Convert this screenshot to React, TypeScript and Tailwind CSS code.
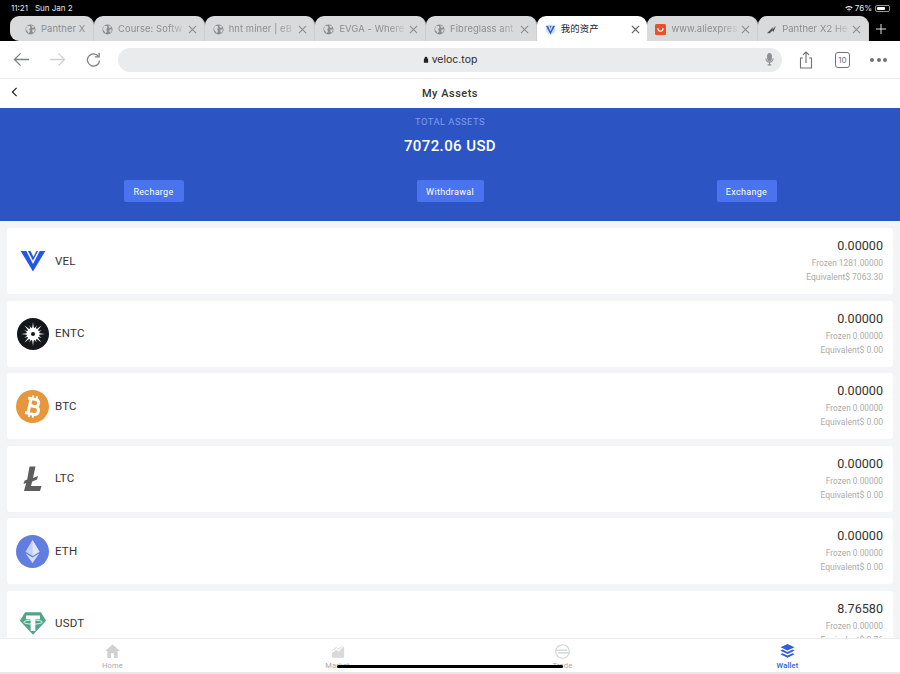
import { ReactNode } from "react";

const tabs = [
  { title: "Course: Softw", icon: "globe" },
  { title: "hnt miner | eB", icon: "globe" },
  { title: "EVGA - Where", icon: "globe" },
  { title: "Fibreglass ant", icon: "globe" },
  { title: "我的资产", icon: "vel", active: true },
  { title: "www.aliexpres", icon: "ali" },
  { title: "Panther X2 He", icon: "panther" },
];

function Globe() {
  return (
    <svg viewBox="0 0 12 12" className="w-[11px] h-[11px] shrink-0">
      <circle cx="6" cy="6" r="5.5" fill="#8b8d91" />
      <path d="M2 2.5 L5 2 L6 4 L4.5 5.5 L5.5 8 L4 10 L2.5 8 L1 6 Z M7 1 L10 3 L9 4.5 L7.5 3.5 Z M8 6 L11 6 L9.5 9.5 L8 8.5 Z" fill="#d9dadc" />
    </svg>
  );
}

function TabIcon({ icon }: { icon?: string }) {
  if (icon === "vel") {
    return (
      <svg viewBox="0 0 12 12" className="w-[11px] h-[11px] shrink-0">
        <circle cx="6" cy="6" r="5.5" fill="#d5e0f8" />
        <path d="M1 2 L6 11.5 L11 2 L8.8 2 L6 8 L3.2 2 Z" fill="#2f5fd0" />
        <path d="M5 2 L6 5 L7 2 Z" fill="#2f5fd0" />
      </svg>
    );
  }
  if (icon === "ali") {
    return (
      <svg viewBox="0 0 12 12" className="w-[11px] h-[11px] shrink-0">
        <rect width="12" height="12" rx="1.5" fill="#e8502f" />
        <path d="M3 4.5 C3.5 9 8.5 9 9 4.5" stroke="#fff" strokeWidth="1.2" fill="none" />
      </svg>
    );
  }
  if (icon === "panther") {
    return (
      <svg viewBox="0 0 12 12" className="w-[11px] h-[11px] shrink-0">
        <path d="M1 10 L8 3 L7 6 L11 2 L8 9 L7.5 7 L4 10 Z" fill="#4f5a50" />
      </svg>
    );
  }
  return <Globe />;
}

function CloseIcon({ dark }: { dark?: boolean }) {
  return (
    <svg viewBox="0 0 10 10" className="w-[9px] h-[9px] shrink-0" stroke={dark ? "#55575a" : "#8b8d91"} strokeWidth="1.2" fill="none">
      <path d="M1 1 L9 9 M9 1 L1 9" />
    </svg>
  );
}

function Tab({ title, icon, active, first }: { title: string; icon?: string; active?: boolean; first?: boolean }) {
  return (
    <div
      className={`flex items-center h-full pt-[1px] rounded-t-[9px] ${first ? "w-[84px] pl-[15px] rounded-bl-[9px]" : "w-[110.7px] pl-[8px]"} pr-[7px] ${active ? "bg-white text-[#222]" : "bg-[#d9dadc] text-[#8b8d91] border-r border-[#cdced0]"}`}
    >
      <TabIcon icon={icon} />
      <span className={`ml-[5px] flex-1 whitespace-nowrap text-[9.4px] tracking-[0.1px] ${active || first ? "" : "[mask-image:linear-gradient(to_right,black_72%,transparent)]"}`}>
        {title}
      </span>
      {!first && <CloseIcon dark={active} />}
    </div>
  );
}

function StatusBar() {
  return (
    <div className="h-[16px] bg-black text-[#e8e8e8] text-[8px] flex items-center justify-between pl-[11px] pr-[10px]">
      <div className="flex gap-[7px]">
        <span>11:21</span>
        <span>Sun Jan 2</span>
      </div>
      <div className="flex items-center gap-[2px]">
        <svg viewBox="0 0 12 9" className="w-[8px] h-[7px]">
          <path d="M0.5 3 C3.5 0 8.5 0 11.5 3 L10.2 4.4 C8 2.2 4 2.2 1.8 4.4 Z M3 5.5 C4.6 4 7.4 4 9 5.5 L7.7 6.8 C6.8 6 5.2 6 4.3 6.8 Z M6 9 L4.9 7.7 C5.5 7.2 6.5 7.2 7.1 7.7 Z" fill="#e8e8e8" />
        </svg>
        <span>76%</span>
        <div className="w-[15px] h-[7px] rounded-[2px] border border-[#999] p-px ml-[1px]">
          <div className="w-3/4 h-full bg-white rounded-[1px]" />
        </div>
      </div>
    </div>
  );
}

function TabBar() {
  return (
    <div className="h-[25px] bg-black flex pl-[10px]">
      <Tab title="Panther X" first />
      {tabs.map((t) => (
        <Tab key={t.title} title={t.title} icon={t.icon} active={t.active} />
      ))}
      <div className="flex-1 flex items-center justify-center pr-[6px] pt-[1px]">
        <svg viewBox="0 0 12 12" className="w-[12px] h-[12px]" stroke="#e5e5e5" strokeWidth="1" fill="none">
          <path d="M6 1 V11 M1 6 H11" />
        </svg>
      </div>
    </div>
  );
}

function Toolbar() {
  return (
    <div className="h-[38px] bg-white border-b border-[#e9e9ea] flex items-center pl-[13px] pr-[11px]">
      <svg viewBox="0 0 18 16" className="w-[17px] h-[15px]" stroke="#7e8084" strokeWidth="1.4" fill="none">
        <path d="M17 8 H1.5 M8 1.5 L1.5 8 L8 14.5" />
      </svg>
      <svg viewBox="0 0 18 16" className="w-[17px] h-[15px] ml-[19px]" stroke="#cfd0d2" strokeWidth="1.4" fill="none">
        <path d="M1 8 H16.5 M10 1.5 L16.5 8 L10 14.5" />
      </svg>
      <svg viewBox="0 0 16 16" className="w-[15px] h-[15px] ml-[20px]" stroke="#7e8084" strokeWidth="1.4" fill="none">
        <path d="M13.5 5 A6.5 6.5 0 1 0 14.5 9" />
        <path d="M9.5 5.2 H14 V0.8" />
      </svg>
      <div className="ml-[17px] w-[664px] h-[24px] rounded-full bg-[#eaebec] flex items-center relative">
        <div className="flex-1 flex items-center justify-center gap-[3px] text-[10.5px] text-[#2b2b2b]">
          <svg viewBox="0 0 8 10" className="w-[6px] h-[7px]">
            <path d="M2 4 V3 A2 2 0 0 1 6 3 V4 H7 V9.5 H1 V4 Z" fill="#222" />
          </svg>
          <span>veloc.top</span>
        </div>
        <svg viewBox="0 0 10 14" className="absolute right-[8px] w-[9px] h-[13px]" fill="none" stroke="#8e9093" strokeWidth="1.2">
          <rect x="3" y="0.5" width="4" height="8" rx="2" fill="#8e9093" />
          <path d="M1 6 A4 4 0 0 0 9 6 M5 10 V13 M3 13 H7" />
        </svg>
      </div>
      <svg viewBox="0 0 14 18" className="w-[14px] h-[18px] ml-[17px]" stroke="#6f7174" strokeWidth="1.1" fill="none">
        <path d="M4 7 H1.5 V17 H12.5 V7 H10 M7 12 V1 M4 3.8 L7 1 L10 3.8" />
      </svg>
      <div className="ml-[22px] w-[15px] h-[16px] rounded-[3px] border border-[#6f7174] text-[#6f7174] text-[8px] flex items-center justify-center">
        10
      </div>
      <div className="ml-[20px] flex gap-[2.5px]">
        <span className="w-[4px] h-[4px] rounded-full bg-[#6f7174]" />
        <span className="w-[4px] h-[4px] rounded-full bg-[#6f7174]" />
        <span className="w-[4px] h-[4px] rounded-full bg-[#6f7174]" />
      </div>
    </div>
  );
}

function VelIcon() {
  return (
    <svg viewBox="0 0 28 24" className="w-[28px] h-[22px]">
      <path d="M0.5 1 L27.5 1 L14 23.5 Z" fill="#2456e6" />
      <path d="M7 0 L14 13.5 L21 0" stroke="#fff" strokeWidth="1.6" fill="none" />
      <path d="M11 0.5 L18 0.5 L14.5 7.5 Z" fill="#fff" />
    </svg>
  );
}

function EntcIcon() {
  const spikes = Array.from({ length: 16 }, (_, i) => i * 22.5);
  return (
    <svg viewBox="0 0 32 32" className="w-[32px] h-[32px]">
      <circle cx="16" cy="16" r="16" fill="#14171a" />
      {spikes.map((a, i) => (
        <path key={a} d={`M14.4 16 L16 ${i % 2 ? 6.5 : 4} L17.6 16 Z`} fill="#fff" transform={`rotate(${a} 16 16)`} />
      ))}
      <circle cx="16" cy="16" r="6.5" fill="#fff" />
      <circle cx="16" cy="16" r="2" fill="#14171a" />
    </svg>
  );
}

function BtcIcon() {
  return (
    <svg viewBox="0 0 33 33" className="w-[33px] h-[33px]">
      <circle cx="16.5" cy="16.5" r="16.5" fill="#e7963c" />
      <g transform="rotate(12 16.5 16.5)" fill="none" stroke="#fff">
        <path d="M10.5 9 H18.5 C23 9 23 16 18.5 16 H13 M13 16 H19.5 C24.5 16 24.5 24 19.5 24 H10.5 M13.5 9 V24" strokeWidth="3" />
        <path d="M15 5.5 V9 M19 5.5 V9 M15 24 V27.5 M19 24 V27.5" strokeWidth="1.8" />
      </g>
    </svg>
  );
}

function LtcIcon() {
  return (
    <svg viewBox="0 0 33 33" className="w-[33px] h-[33px]">
      <path d="M13.5 4.5 H19.5 L17 16 L22 14 L21 17.5 L16.2 19.5 L15 24 H25.5 L24 29 H8 L10.2 21 L7.5 22 L8.5 18.7 L11.2 17.6 Z" fill="#5d5d5d" />
    </svg>
  );
}

function EthIcon() {
  return (
    <svg viewBox="0 0 33 33" className="w-[33px] h-[33px]">
      <circle cx="16.5" cy="16.5" r="16.5" fill="#627de0" />
      <path d="M16.5 5 L9.5 16.8 L16.5 21 L23.5 16.8 Z" fill="#c4cef3" />
      <path d="M16.5 5 V21 L23.5 16.8 Z" fill="#dfe5fa" />
      <path d="M9.5 18.3 L16.5 28 L23.5 18.3 L16.5 22.5 Z" fill="#d7def8" />
    </svg>
  );
}

function UsdtIcon() {
  return (
    <svg viewBox="0 0 30 26" className="w-[28px] h-[25px]">
      <path d="M6.5 1 H23.5 L29 10 L15 25 L1 10 Z" fill="#50a586" />
      <path d="M7.5 4.5 H22.5 V8.5 H17.5 V21 H12.5 V8.5 H7.5 Z" fill="#fff" />
      <ellipse cx="15" cy="11.5" rx="10" ry="2.2" fill="none" stroke="#fff" strokeWidth="0.9" />
    </svg>
  );
}

const assets: { name: string; icon: ReactNode; amount: string; frozen: string; equivalent: string }[] = [
  { name: "VEL", icon: <VelIcon />, amount: "0.00000", frozen: "1281.00000", equivalent: "7063.30" },
  { name: "ENTC", icon: <EntcIcon />, amount: "0.00000", frozen: "0.00000", equivalent: "0.00" },
  { name: "BTC", icon: <BtcIcon />, amount: "0.00000", frozen: "0.00000", equivalent: "0.00" },
  { name: "LTC", icon: <LtcIcon />, amount: "0.00000", frozen: "0.00000", equivalent: "0.00" },
  { name: "ETH", icon: <EthIcon />, amount: "0.00000", frozen: "0.00000", equivalent: "0.00" },
  { name: "USDT", icon: <UsdtIcon />, amount: "8.76580", frozen: "0.00000", equivalent: "8.76" },
];

function AssetRow({ name, icon, amount, frozen, equivalent }: (typeof assets)[number]) {
  return (
    <div className="h-[66px] shrink-0 mb-[6.5px] bg-white rounded-[3px] flex items-center pl-[9px] pr-[10px]">
      <div className="w-[33px] h-[33px] flex items-center justify-center">{icon}</div>
      <span className="ml-[6px] pt-[1px] text-[11.5px] text-[#333] tracking-[0.2px]">{name}</span>
      <div className="ml-auto flex flex-col items-end">
        <span className="text-[12.6px] leading-[16px] mb-[2px] text-[#333]">{amount}</span>
        <span className="text-[8.3px] leading-[14px] text-[#ababab]">Frozen {frozen}</span>
        <span className="text-[8.5px] leading-[14px] text-[#ababab]">Equivalent$ {equivalent}</span>
      </div>
    </div>
  );
}

function NavItem({ label, active, children }: { label: string; active?: boolean; children: ReactNode }) {
  return (
    <div className="flex flex-col items-center pt-[4px]">
      <div className="h-[16px] flex items-center justify-center">{children}</div>
      <span className={`text-[7.5px] mt-[2px] leading-[10px] tracking-[0.2px] ${active ? "text-[#2f5fdc] font-medium" : "text-[#a9a9a9]"}`}>{label}</span>
    </div>
  );
}

export default function App() {
  return (
    <div className="w-[900px] h-[674px] overflow-hidden flex flex-col relative bg-[#f3f4f6] font-['Roboto',sans-serif]">
      <div className="font-['Inter','Noto_Sans_CJK_SC',sans-serif]">
        <StatusBar />
        <TabBar />
        <Toolbar />
      </div>
      <header className="h-[29px] pt-[1px] bg-white flex items-center justify-center relative">
        <svg viewBox="0 0 8 12" className="absolute left-[11px] top-[8px] w-[7px] h-[10px]" stroke="#222" strokeWidth="1.5" fill="none">
          <path d="M6.5 1 L1.5 6 L6.5 11" />
        </svg>
        <h1 className="text-[11px] font-medium text-[#333] tracking-[0.5px]">My Assets</h1>
      </header>
      <section className="h-[113px] bg-[#2c55c3] flex flex-col items-center px-[7px]">
        <p className="mt-[7px] text-[9.5px] leading-[13px] text-[#7d9bf0] tracking-[0.4px]">TOTAL ASSETS</p>
        <p className="mt-[8px] text-[15px] leading-[20px] font-medium text-white tracking-[0.4px]">7072.06 USD</p>
        <div className="mt-[24px] w-full flex justify-around">
          {["Recharge", "Withdrawal", "Exchange"].map((b) => (
            <button key={b} className={`h-[22px] pt-[3px] rounded-[2px] bg-[#4a73ef] text-white text-[9px] tracking-[0.3px] flex items-center justify-center ${b === "Withdrawal" ? "w-[67px]" : "w-[60px]"}`}>
              {b}
            </button>
          ))}
        </div>
      </section>
      <main className="flex-1 min-h-0 overflow-hidden px-[7px] pt-[7px]">
        {assets.map((a) => (
          <AssetRow key={a.name} {...a} />
        ))}
      </main>
      <nav className="h-[36px] bg-white border-t border-[#ececec] border-b-2 border-b-[#e8e8e8] grid grid-cols-4 shrink-0">
        <NavItem label="Home">
          <svg viewBox="0 0 16 15" className="w-[15px] h-[14px]">
            <path d="M8 0.5 L16 7.5 H13.5 V15 H9.5 V10 H6.5 V15 H2.5 V7.5 H0 Z" fill="#d0d1d3" />
          </svg>
        </NavItem>
        <NavItem label="Market">
          <svg viewBox="0 0 16 14" className="w-[14px] h-[13px]">
            <path d="M1 9 L6 5 L9 7 L15 1 V14 H1 Z" fill="#d8d9db" />
            <path d="M1 6 L6 2.5 L9 4.5 L13 1" stroke="#d0d1d3" strokeWidth="1" fill="none" />
          </svg>
        </NavItem>
        <NavItem label="Trade">
          <svg viewBox="0 0 16 16" className="w-[15px] h-[15px]" fill="none" stroke="#d0d1d3" strokeWidth="1.1">
            <circle cx="8" cy="8" r="7.2" />
            <path d="M1 6.5 H13 M3 9.5 H15" strokeWidth="1.5" />
          </svg>
        </NavItem>
        <NavItem label="Wallet" active>
          <svg viewBox="0 0 16 15" className="w-[15px] h-[14px]" fill="#2f5fdc">
            <path d="M8 0 L15.5 3.5 L8 7 L0.5 3.5 Z" />
            <path d="M2.5 6 L8 8.5 L13.5 6 L15.5 7.3 L8 10.8 L0.5 7.3 Z" />
            <path d="M2.5 9.8 L8 12.2 L13.5 9.8 L15.5 11 L8 14.6 L0.5 11 Z" />
          </svg>
        </NavItem>
      </nav>
      <div className="absolute left-[337px] bottom-[6px] w-[226px] h-[3px] rounded-full bg-black" />
    </div>
  );
}
